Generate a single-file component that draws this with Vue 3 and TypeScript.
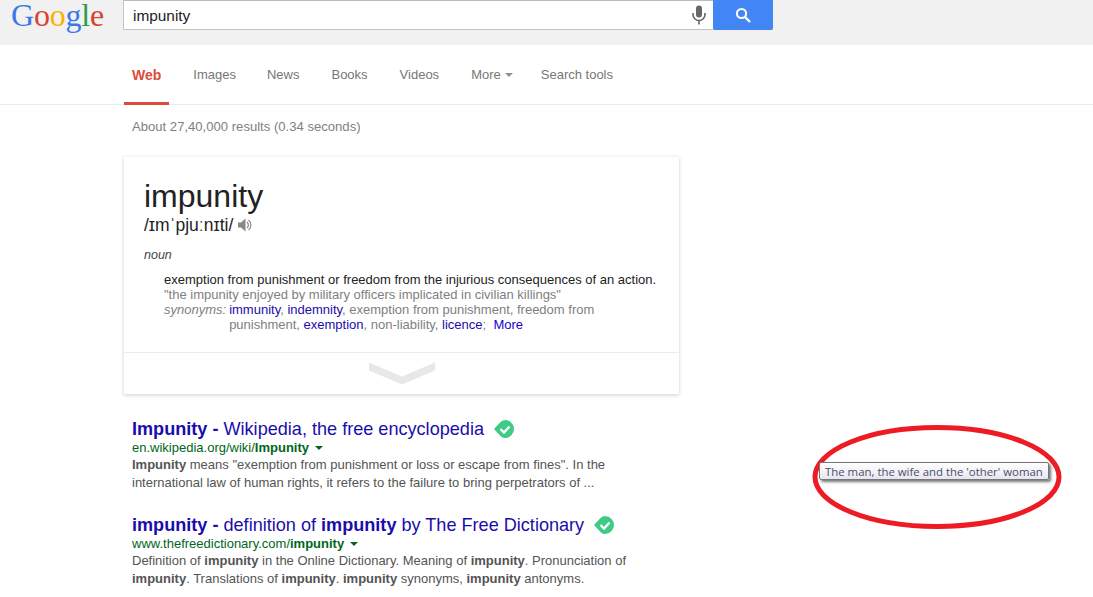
<script setup lang="ts">
const tabs = ['Images', 'News', 'Books', 'Videos']

const logo = [
  { ch: 'G', color: '#3b78e7' },
  { ch: 'o', color: '#d6432f' },
  { ch: 'o', color: '#f4b400' },
  { ch: 'g', color: '#3b78e7' },
  { ch: 'l', color: '#2c9b4e' },
  { ch: 'e', color: '#d6432f' },
]
</script>

<template>
  <div class="page">
    <header class="top">
      <div class="logo"><span v-for="(l, i) in logo" :key="i" :style="{ color: l.color }">{{ l.ch }}</span></div>
      <div class="search">
        <div class="query">impunity</div>
        <svg class="mic" width="16" height="20" viewBox="0 0 16 20">
          <rect x="5" y="0.5" width="6" height="12" rx="3" fill="#666" />
          <path d="M2 8v1.5a6 6 0 0 0 12 0V8" fill="none" stroke="#666" stroke-width="1.6" />
          <rect x="7.2" y="15" width="1.6" height="4.5" fill="#666" />
        </svg>
        <div class="go">
          <svg width="16" height="16" viewBox="0 0 16 16">
            <circle cx="6.5" cy="6.5" r="4.6" fill="none" stroke="#fff" stroke-width="2" />
            <path d="M10 10l5 5" stroke="#fff" stroke-width="2.4" />
          </svg>
        </div>
      </div>
    </header>

    <nav class="tabs">
      <a class="tab active">Web</a>
      <a v-for="t in tabs" :key="t" class="tab">{{ t }}</a>
      <a class="tab more">More<i class="caret"></i></a>
      <a class="tab">Search tools</a>
    </nav>

    <main class="main">
      <div class="stats">About 27,40,000 results (0.34 seconds)</div>

      <section class="card">
        <div class="card-body">
          <div class="word">impunity</div>
          <div class="phon">
            <span>/ɪmˈpjuːnɪti/</span>
            <svg width="16" height="16" viewBox="0 0 16 16">
              <path d="M1 5.5h3L8.5 1.5v13L4 10.5H1z" fill="#888" />
              <path d="M10 5a4 4 0 0 1 0 6M11.5 3a6.5 6.5 0 0 1 0 10" fill="none" stroke="#888" stroke-width="1.2" />
            </svg>
          </div>
          <div class="pos">noun</div>
          <div class="def">
            <div class="meaning">exemption from punishment or freedom from the injurious consequences of an action.</div>
            <div class="example">"the impunity enjoyed by military officers implicated in civilian killings"</div>
            <div class="syn">
              <em>synonyms:</em>
              <div class="syn-list">
                <a>immunity</a>, <a>indemnity</a>, exemption from punishment, freedom from punishment, <a>exemption</a>, non-liability, <a>licence</a>;&nbsp; <a class="blue">More</a>
              </div>
            </div>
          </div>
        </div>
        <div class="card-foot">
          <svg width="66" height="23" viewBox="0 0 66 23">
            <path d="M0 0.5l33 14 33-14v8l-33 14-33-14z" fill="#e8e8e8" />
          </svg>
        </div>
      </section>

      <article class="result first">
        <h3 class="title"><a><b>Impunity -</b> Wikipedia, the free encyclopedia</a>
          <svg class="check" width="22" height="20" viewBox="0 0 22 20">
            <path d="M1 10L7 3.5Q9 1 12 1a9 9 0 0 1 0 18Q9 19 7 16.5z" fill="#3ecb85" />
            <path d="M7.5 10l3.5 3.5 5.5-6" fill="none" stroke="#fff" stroke-width="2.4" />
          </svg>
        </h3>
        <div class="url">en.wikipedia.org/wiki/<b>Impunity</b><i class="arrow"></i></div>
        <p class="snip"><b>Impunity</b> means "exemption from punishment or loss or escape from fines". In the international law of human rights, it refers to the failure to bring perpetrators of ...</p>
      </article>

      <article class="result">
        <h3 class="title"><a><b>impunity -</b> definition of <b>impunity</b> by The Free Dictionary</a>
          <svg class="check" width="22" height="20" viewBox="0 0 22 20">
            <path d="M1 10L7 3.5Q9 1 12 1a9 9 0 0 1 0 18Q9 19 7 16.5z" fill="#3ecb85" />
            <path d="M7.5 10l3.5 3.5 5.5-6" fill="none" stroke="#fff" stroke-width="2.4" />
          </svg>
        </h3>
        <div class="url">www.thefreedictionary.com/<b>impunity</b><i class="arrow"></i></div>
        <p class="snip">Definition of <b>impunity</b> in the Online Dictionary. Meaning of <b>impunity</b>. Pronunciation of <b>impunity</b>. Translations of <b>impunity</b>. <b>impunity</b> synonyms, <b>impunity</b> antonyms.</p>
      </article>
    </main>

    <!-- hand-drawn annotation on top of the page -->
    <svg class="ring" width="252" height="108" viewBox="0 0 252 108">
      <ellipse cx="126" cy="54" rx="122" ry="49.5" fill="none" stroke="#ed1c24" stroke-width="5" />
    </svg>
    <div class="tip">The man, the wife and the 'other' woman</div>
  </div>
</template>

<style>
html,
body {
  margin: 0;
  background: #fff;
}
</style>

<style scoped>
.page {
  position: relative;
  width: 1093px;
  height: 597px;
  overflow: hidden;
  font-family: "Liberation Sans", Arial, sans-serif;
  font-size: 13px;
  color: #222;
}

.top {
  display: flex;
  height: 45px;
  background: #f1f1f1;
}

.logo {
  width: 123px;
  box-sizing: border-box;
  padding-left: 11px;
  font-family: "Liberation Serif", serif;
  font-size: 32px;
  line-height: 30px;
  letter-spacing: -0.2px;
}

.logo span {
  display: inline-block;
}

.search {
  display: flex;
  align-items: center;
  width: 650px;
  height: 30px;
  box-sizing: border-box;
  background: #fff;
  border: 1px solid #c4c4c4;
  border-top-color: #bbb;
  border-right: 0;
  border-radius: 1px;
}

.query {
  flex: 1;
  padding: 1px 0 0 9px;
  font-size: 15.4px;
  color: #222;
}

.mic {
  margin-right: 6px;
}

.go {
  display: flex;
  align-items: center;
  justify-content: center;
  width: 60px;
  height: 30px;
  margin-top: -1px;
  margin-bottom: -1px;
  background: #4285f4;
  border-radius: 0 0 2px 2px;
}

.tabs {
  display: flex;
  height: 60px;
  box-sizing: border-box;
  padding-left: 124px;
  border-bottom: 1px solid #ebebeb;
}

.tab {
  display: block;
  height: 60px;
  box-sizing: border-box;
  padding: 22px 8px 0;
  margin-right: 16px;
  color: #777;
}

.tab:nth-child(2) {
  margin-right: 15px;
}

.active {
  color: #dd4b39;
  font-size: 14px;
  font-weight: bold;
  border-bottom: 3px solid #dd4b39;
}

.more {
  margin-right: 12px;
}

.caret {
  display: inline-block;
  margin: 0 0 2px 4px;
  vertical-align: middle;
  border-left: 4px solid transparent;
  border-right: 4px solid transparent;
  border-top: 4px solid #909090;
}

.main {
  padding-left: 124px;
}

.stats {
  padding: 14px 0 0 8px;
  height: 38px;
  box-sizing: border-box;
  font-size: 13.1px;
  line-height: 16px;
  color: #808080;
}

.card {
  width: 555px;
  margin-top: 14px;
  background: #fff;
  box-shadow: 0 1px 4px rgba(0, 0, 0, 0.2);
}

.card-body {
  height: 196px;
  box-sizing: border-box;
  padding: 23px 20px 0;
  border-bottom: 1px solid #ebebeb;
}

.word {
  font-size: 32px;
  line-height: 32px;
  color: #222;
}

.phon {
  display: flex;
  align-items: center;
  gap: 4px;
  height: 24px;
  font-size: 17.5px;
  margin-top: 1px;
}

.pos {
  margin-top: 10px;
  font-size: 12.5px;
  font-style: italic;
  color: #444;
  line-height: 16px;
}

.def {
  margin: 9px 0 0 20px;
  font-size: 13px;
  line-height: 15px;
}

.example {
  color: #808080;
}

.syn {
  display: flex;
  gap: 3px;
  color: #808080;
}

.syn-list {
  width: 380px;
}

.syn a {
  color: #1a0dab;
}

.syn .blue {
  color: #2200d0;
}

.card-foot {
  display: flex;
  justify-content: center;
  align-items: flex-start;
  height: 41px;
  padding-top: 9px;
  box-sizing: border-box;
}

.result {
  margin-left: 8px;
  width: 520px;
}

.first {
  margin-top: 24px;
}

.result + .result {
  margin-top: 22px;
}

.title {
  display: flex;
  align-items: center;
  gap: 9px;
  margin: 0;
  font-size: 18.1px;
  line-height: 22px;
  font-weight: normal;
  color: #1a0dab;
}

.title b {
  font-weight: bold;
}

.url {
  font-size: 13px;
  line-height: 15px;
  color: #006621;
}

.arrow {
  display: inline-block;
  margin: 0 0 2px 6px;
  vertical-align: middle;
  border-left: 4px solid transparent;
  border-right: 4px solid transparent;
  border-top: 4px solid #006621;
}

.snip {
  margin: 1px 0 0;
  font-size: 13px;
  line-height: 18px;
  color: #545454;
}

.ring {
  position: absolute;
  left: 811px;
  top: 423px;
}

.tip {
  position: absolute;
  left: 819px;
  top: 462px;
  width: 230px;
  height: 18px;
  box-sizing: border-box;
  padding-left: 5px;
  font-family: "Open Sans", sans-serif;
  font-size: 11.4px;
  line-height: 17px;
  white-space: nowrap;
  color: #4c4f63;
  background: linear-gradient(#fff, #e6e6f2);
  border: 1px solid #777;
  border-radius: 2px;
  box-shadow: 2px 2px 3px rgba(0, 0, 0, 0.55);
}
</style>
